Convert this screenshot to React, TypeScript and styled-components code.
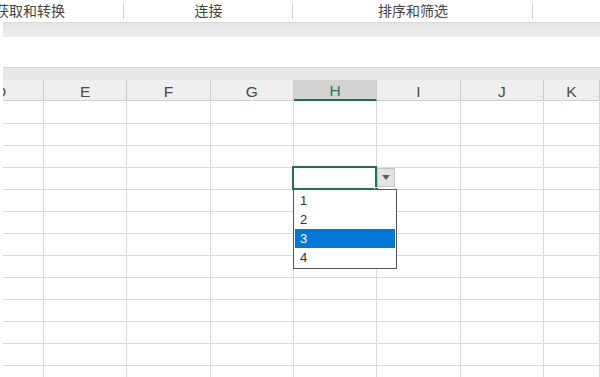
import * as React from 'react';
import styled, { createGlobalStyle } from 'styled-components';

const GlobalStyle = createGlobalStyle`
  html, body {
    margin: 0;
    padding: 0;
    background: #fff;
    overflow: hidden;
  }
  * {
    box-sizing: border-box;
  }
`;

const gridLine = '#dadada';
const excelGreen = '#217346';

const columns = ['D', 'E', 'F', 'G', 'H', 'I', 'J', 'K'];
const activeCol = 4;
const activeRow = 3;
const rowCount = 13;
const options = ['1', '2', '3', '4'];
const selectedOption = 2;

const Page = styled.div`
  width: 600px;
  height: 377px;
  overflow: hidden;
  display: flex;
  flex-direction: column;
  font-family: "Liberation Sans", Arial, sans-serif;
`;

// Group captions of the ribbon; the first group is scrolled partly out of view
const RibbonLabels = styled.div`
  display: flex;
  height: 22px;
  margin-left: -64px;
  flex-shrink: 0;
`;

const RibbonGroup = styled.div<{ $width: number }>`
  flex: 0 0 ${(p) => p.$width}px;
  display: flex;
  align-items: center;
  justify-content: center;
  position: relative;
  font-family: "Noto Sans CJK SC", sans-serif;
  font-size: 14px;
  color: #444;
  padding-bottom: 2px;

  // short divider between groups
  &:not(:last-child)::after {
    content: '';
    position: absolute;
    right: 0;
    top: 4px;
    height: 15px;
    border-right: 1px solid #cdcdcd;
  }
`;

const GroupCaption = styled.span`
  line-height: 1;
`;

const RibbonBand = styled.div`
  height: 15px;
  margin-left: 3px;
  flex-shrink: 0;
  border-top: 1px solid #d9d9d9;
  background: linear-gradient(#e5e5e5, #ededed);
`;

const FormulaArea = styled.div`
  height: 30px;
  flex-shrink: 0;
  background: #fff;
`;

const HeaderStrip = styled.div`
  height: 13px;
  margin-left: 3px;
  flex-shrink: 0;
  border-top: 1px solid #d2d2d2;
  background: #e8e8e8;
`;

const Sheet = styled.div`
  display: grid;
  grid-template-columns: 41px repeat(6, 83.33px) 1fr;
  grid-auto-rows: 22px;
  padding-left: 3px;
`;

const ColumnHeader = styled.div<{ $active?: boolean }>`
  height: 21px;
  display: flex;
  align-items: center;
  justify-content: center;
  font-size: 15.5px;
  padding-top: 3px;
  color: ${(p) => (p.$active ? '#2b7a4f' : '#4a4a4a')};
  background: ${(p) => (p.$active ? '#d3d3d3' : '#efefef')};
  border-right: 1px solid #cacaca;
  border-bottom: ${(p) => (p.$active ? `2px solid ${excelGreen}` : '1px solid #d0d0d0')};

  &:first-child {
    justify-content: flex-start;
    text-indent: -8px;
    overflow: hidden;
  }
`;

const Cell = styled.div<{ $active?: boolean }>`
  position: relative;
  background: #fff;
  border-right: 1px solid ${gridLine};
  border-bottom: 1px solid ${gridLine};
  z-index: ${(p) => (p.$active ? 2 : 0)};

  ${(p) =>
    p.$active &&
    `
    &::after {
      content: '';
      position: absolute;
      top: -2px;
      left: -2px;
      right: -1px;
      bottom: -1px;
      border: 2px solid ${excelGreen};
    }
  `}
`;

const FillHandle = styled.div`
  position: absolute;
  right: -3px;
  bottom: -3px;
  width: 5px;
  height: 5px;
  background: ${excelGreen};
  border: 1px solid #fff;
  z-index: 3;
`;

const DropButton = styled.div`
  position: absolute;
  left: calc(100% + 1px);
  top: 0;
  width: 18px;
  height: 19px;
  background: #e3e3e3;
  border: 1px solid #c4c4c4;
  display: flex;
  align-items: center;
  justify-content: center;
`;

const Triangle = styled.div`
  width: 0;
  height: 0;
  border-left: 4px solid transparent;
  border-right: 4px solid transparent;
  border-top: 5px solid #606060;
`;

const OptionList = styled.div`
  position: absolute;
  left: -1px;
  top: 100%;
  width: 104px;
  padding: 1px;
  background: #fff;
  border: 1px solid #555;
  display: flex;
  flex-direction: column;
  z-index: 4;
`;

const OptionItem = styled.div<{ $selected?: boolean }>`
  height: 19px;
  display: flex;
  align-items: center;
  padding-left: 5px;
  font-size: 13px;
  color: ${(p) => (p.$selected ? '#fff' : '#333')};
  background: ${(p) => (p.$selected ? '#0078d7' : 'transparent')};
`;

const groups = [
  { label: '获取和转换', width: 188 },
  { label: '连接', width: 169 },
  { label: '排序和筛选', width: 240 },
  { label: '', width: 140 },
];

export default function App() {
  const rows = Array.from({ length: rowCount }, (_, r) => r);
  return (
    <Page>
      <GlobalStyle />
      <RibbonLabels>
        {groups.map((g, i) => (
          <RibbonGroup key={i} $width={g.width}>
            <GroupCaption>{g.label}</GroupCaption>
          </RibbonGroup>
        ))}
      </RibbonLabels>
      <RibbonBand />
      <FormulaArea />
      <HeaderStrip />
      <Sheet>
        {columns.map((c, i) => (
          <ColumnHeader key={c} $active={i === activeCol}>
            {c}
          </ColumnHeader>
        ))}
        {rows.map((r) =>
          columns.map((c, i) => {
            const active = r === activeRow && i === activeCol;
            return (
              <Cell key={`${c}${r}`} $active={active}>
                {active && (
                  <>
                    <FillHandle />
                    <DropButton>
                      <Triangle />
                    </DropButton>
                    <OptionList>
                      {options.map((o, k) => (
                        <OptionItem key={o} $selected={k === selectedOption}>
                          {o}
                        </OptionItem>
                      ))}
                    </OptionList>
                  </>
                )}
              </Cell>
            );
          })
        )}
      </Sheet>
    </Page>
  );
}
